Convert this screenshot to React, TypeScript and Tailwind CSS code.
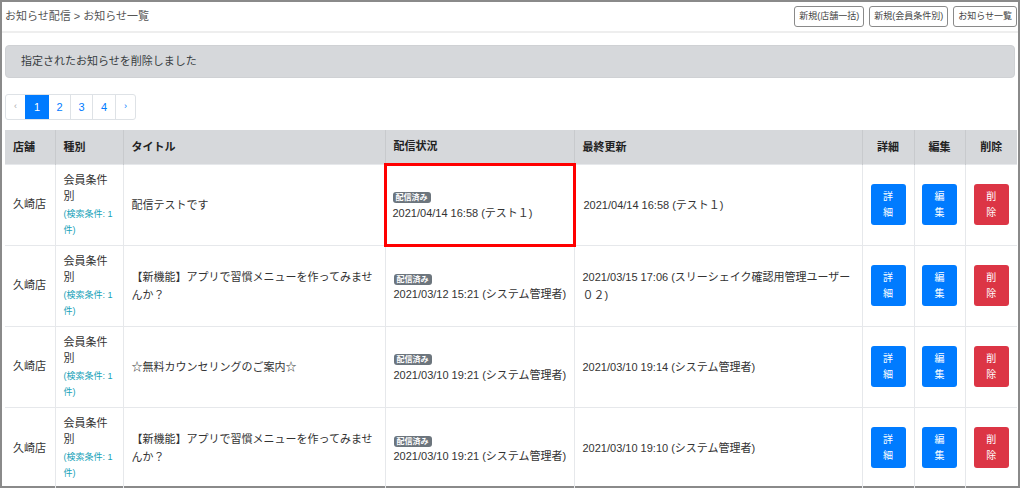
const rows = [
  {
    title: '配信テストです',
    sent: '2021/04/14 16:58 (テスト１)',
    updated: '2021/04/14 16:58 (テスト１)',
    marked: true,
  },
  {
    title: '【新機能】アプリで習慣メニューを作ってみませんか？',
    sent: '2021/03/12 15:21 (システム管理者)',
    updated: '2021/03/15 17:06 (スリーシェイク確認用管理ユーザー０２)',
    marked: false,
  },
  {
    title: '☆無料カウンセリングのご案内☆',
    sent: '2021/03/10 19:21 (システム管理者)',
    updated: '2021/03/10 19:14 (システム管理者)',
    marked: false,
  },
  {
    title: '【新機能】アプリで習慣メニューを作ってみませんか？',
    sent: '2021/03/10 19:21 (システム管理者)',
    updated: '2021/03/10 19:10 (システム管理者)',
    marked: false,
  },
]

function ActionButton({ label, color }: { label: string; color: string }) {
  return (
    <div
      className={`mx-auto flex h-[41px] w-[35px] flex-col items-center justify-center rounded-[3px] text-[10px] leading-[16px] text-white ${color}`}
    >
      <span>{label[0]}</span>
      <span>{label[1]}</span>
    </div>
  )
}

export default function App() {
  return (
    <div
      className="h-[488px] w-[1024px] overflow-hidden bg-white text-[11px] text-[#333]"
      style={{ fontFamily: '"Liberation Sans", "Noto Sans CJK JP", sans-serif' }}
    >
      <div className="h-[488px] w-[1020px] border-2 border-[#8a8a8a] bg-white">
        {/* header */}
        <div className="flex h-[31px] items-center justify-between border-b-2 border-[#eeeeee] pl-[3px] pr-[1px]">
          <span className="text-[#555]">お知らせ配信 &gt; お知らせ一覧</span>
          <div className="flex gap-[5px] text-[9px] text-[#444]">
            <span className="rounded-[3px] border border-[#8a8a8a] px-[4px] py-[3px]">新規(店舗一括)</span>
            <span className="rounded-[3px] border border-[#8a8a8a] px-[4px] py-[3px]">新規(会員条件別)</span>
            <span className="rounded-[3px] border border-[#8a8a8a] px-[4px] py-[3px]">お知らせ一覧</span>
          </div>
        </div>

        <div className="px-[3px]">
          {/* alert */}
          <div className="mt-[12px] flex h-[33px] items-center rounded-[4px] border border-[#cfd1d4] bg-[#d6d8db] pl-[15px] text-[#383d41]">
            指定されたお知らせを削除しました
          </div>

          {/* pagination */}
          <div className="mt-[16px] flex h-[26px] w-fit rounded-[3px] border border-[#dee2e6] text-[#007bff]">
            <span className="flex w-[19px] items-center justify-center text-[9px] text-[#aaa]">‹</span>
            <span className="flex w-[24px] items-center justify-center bg-[#007bff] text-white">1</span>
            <span className="flex w-[22px] items-center justify-center border-r border-[#dee2e6]">2</span>
            <span className="flex w-[22px] items-center justify-center border-r border-[#dee2e6]">3</span>
            <span className="flex w-[23px] items-center justify-center border-r border-[#dee2e6]">4</span>
            <span className="flex w-[19px] items-center justify-center text-[9px]">›</span>
          </div>

          {/* table */}
          <table className="mt-[10px] w-[1012px] table-fixed border-collapse">
            <colgroup>
              <col className="w-[50px]" />
              <col className="w-[68px]" />
              <col className="w-[262px]" />
              <col className="w-[189px]" />
              <col className="w-[288px]" />
              <col className="w-[52px]" />
              <col className="w-[51px]" />
              <col className="w-[52px]" />
            </colgroup>
            <thead>
              <tr className="h-[34px] bg-[#d6d8db] text-left font-bold text-[#222]">
                <th className="border-r border-[#c8cacd] px-[8px]">店舗</th>
                <th className="border-r border-[#c8cacd] px-[8px]">種別</th>
                <th className="border-r border-[#c8cacd] px-[8px]">タイトル</th>
                <th className="border-r border-[#c8cacd] px-[8px]">配信状況</th>
                <th className="border-r border-[#c8cacd] px-[8px]">最終更新</th>
                <th className="border-r border-[#c8cacd] text-center">詳細</th>
                <th className="border-r border-[#c8cacd] text-center">編集</th>
                <th className="text-center">削除</th>
              </tr>
            </thead>
            <tbody>
              {rows.map((r, i) => (
                <tr key={i} className="h-[81px] border-t border-[#e6e8eb] align-middle">
                  <td className="border-r border-[#e6e8eb] px-[8px]">久崎店</td>
                  <td className="border-r border-[#e6e8eb] px-[8px]">
                    <div className="leading-[16px]">会員条件別</div>
                    <div className="mt-[2px] text-[9px] leading-[16px] text-[#17a2b8]">(検索条件: 1件)</div>
                  </td>
                  <td className="border-r border-[#e6e8eb] px-[8px] leading-[18px]">{r.title}</td>
                  <td
                    className={
                      r.marked
                        ? 'border-[3px] border-[#ff0000] px-[6px]'
                        : 'border-r border-[#e6e8eb] px-[8px]'
                    }
                  >
                    <span className="inline-block rounded-[3px] bg-[#6c757d] px-[3px] text-[8px] leading-[11px] font-bold text-white">
                      配信済み
                    </span>
                    <div className="leading-[16px] whitespace-nowrap">{r.sent}</div>
                  </td>
                  <td className="border-r border-[#e6e8eb] px-[8px] leading-[18px]">{r.updated}</td>
                  <td className="border-r border-[#e6e8eb]">
                    <ActionButton label="詳細" color="bg-[#007bff]" />
                  </td>
                  <td className="border-r border-[#e6e8eb]">
                    <ActionButton label="編集" color="bg-[#007bff]" />
                  </td>
                  <td>
                    <ActionButton label="削除" color="bg-[#dc3545]" />
                  </td>
                </tr>
              ))}
            </tbody>
          </table>
        </div>
      </div>
    </div>
  )
}
